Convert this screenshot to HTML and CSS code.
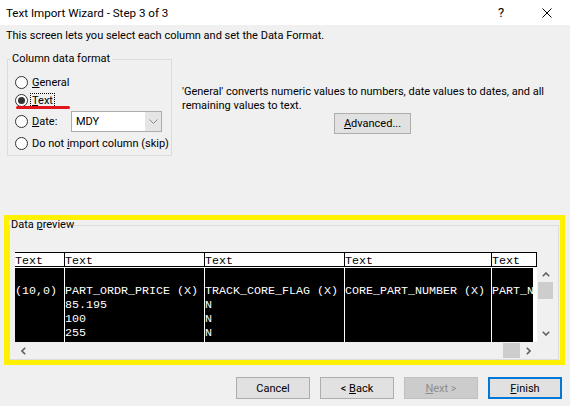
FILE: index.html
```html
<!DOCTYPE html>
<html lang="en">
<head>
  <meta charset="UTF-8">
  <title>Text Import Wizard - Step 3 of 3</title>
  <link rel="stylesheet" href="styles.css">
</head>
<body>

  <div class="titlebar">
    <span class="title">Text Import Wizard - Step 3 of 3</span>
    <span class="ctl help">?</span>
    <span class="ctl">
      <svg width="10" height="10" viewBox="0 0 10 10"><path d="M0.5 0.5L9.5 9.5M9.5 0.5L0.5 9.5" stroke="#000" stroke-width="1"/></svg>
    </span>
  </div>

  <p class="intro">This screen lets you select each column and set the Data Format.</p>

  <div class="options">
    <fieldset class="group format">
      <legend>Column data format</legend>
      <div class="opt"><span class="radio"></span><span class="lbl"><u>G</u>eneral</span></div>
      <div class="opt marked">
        <span class="radio on"></span><span class="lbl focus"><u>T</u>ext</span>
        <span class="redline"></span>
      </div>
      <div class="opt date">
        <span class="radio"></span><span class="lbl"><u>D</u>ate:</span>
        <div class="combo">
          <span class="value">MDY</span>
          <span class="drop"><svg width="9" height="5" viewBox="0 0 9 5"><path d="M0.5 0.5L4.5 4.5L8.5 0.5" fill="none" stroke="#888" stroke-width="1"/></svg></span>
        </div>
      </div>
      <div class="opt skip"><span class="radio"></span><span class="lbl">Do not <u>i</u>mport column (skip)</span></div>
    </fieldset>

    <div class="info">
      <p>'General' converts numeric values to numbers, date values to dates, and all<br>remaining values to text.</p>
      <button class="btn adv"><u>A</u>dvanced...</button>
    </div>
  </div>

  <div class="highlight">
    <fieldset class="group preview-box">
      <legend>Data <u>p</u>review</legend>
      <div class="preview">
        <div class="head">
          <div class="hcell">Text</div>
          <div class="hcell">Text</div>
          <div class="hcell">Text</div>
          <div class="hcell">Text</div>
          <div class="hcell">Text</div>
        </div>
        <div class="blank"></div>
        <div class="rows">
          <div class="col">(10,0)</div>
          <div class="col">PART_ORDR_PRICE (X)<br>85.195<br>100<br>255</div>
          <div class="col">TRACK_CORE_FLAG (X)<br>N<br>N<br>N</div>
          <div class="col">CORE_PART_NUMBER (X)</div>
          <div class="col">PART_NO</div>
        </div>
        <div class="vscroll">
          <span class="arrow"><svg width="8" height="5" viewBox="0 0 8 5"><path d="M0.8 4.2L4 1L7.2 4.2" fill="none" stroke="#606060" stroke-width="1.6"/></svg></span>
          <span class="thumb"></span>
          <span class="fill"></span>
          <span class="arrow"><svg width="8" height="5" viewBox="0 0 8 5"><path d="M0.8 0.8L4 4L7.2 0.8" fill="none" stroke="#606060" stroke-width="1.6"/></svg></span>
        </div>
        <div class="hscroll">
          <span class="arrow"><svg width="5" height="8" viewBox="0 0 5 8"><path d="M4.2 0.8L1 4L4.2 7.2" fill="none" stroke="#606060" stroke-width="1.6"/></svg></span>
          <span class="fill"></span>
          <span class="thumb"></span>
          <span class="arrow"><svg width="5" height="8" viewBox="0 0 5 8"><path d="M0.8 0.8L4 4L0.8 7.2" fill="none" stroke="#606060" stroke-width="1.6"/></svg></span>
        </div>
        <div class="corner"></div>
      </div>
    </fieldset>
  </div>

  <div class="actions">
    <button class="btn">Cancel</button>
    <button class="btn">&lt; <u>B</u>ack</button>
    <button class="btn" disabled><u>N</u>ext &gt;</button>
    <button class="btn default"><u>F</u>inish</button>
  </div>

</body>
</html>
```

FILE: styles.css
```css
body {
  margin: 0;
  width: 570px;
  height: 406px;
  overflow: hidden;
  background: #f0f0f0;
  color: #000;
  font-family: "Segoe UI", Roboto, "Noto Sans", sans-serif;
  font-size: 11px;
}

u {
  text-decoration-thickness: 1px;
}

/* title bar */

.titlebar {
  display: flex;
  align-items: center;
  height: 25px;
  padding-left: 6px;
  background: #fff;
  font-size: 11.6px;
}

.titlebar .title {
  flex: 1;
}

.titlebar .ctl {
  width: 46px;
  display: flex;
  justify-content: center;
}

.titlebar .help {
  font-size: 13px;
}

.intro {
  margin: 0;
  padding: 4px 0 0 6px;
  line-height: 14px;
}

/* group boxes */

.group {
  margin: 0;
  min-width: 0;
  border: 1px solid #dcdcdc;
  box-sizing: border-box;
}

.group legend {
  line-height: 14px;
}

.options {
  display: flex;
  margin-top: 9px;
}

.format {
  width: 165px;
  margin-left: 7px;
  padding: 7px 0 3px 2px;
}

.format legend {
  padding: 0 2px;
}

.opt {
  display: flex;
  align-items: center;
  height: 18px;
  padding-left: 5px;
}

.opt.date {
  height: 21px;
  margin-top: 2px;
}

.opt.skip {
  margin-top: 2px;
}

.marked {
  position: relative;
}

.radio {
  width: 13px;
  height: 13px;
  box-sizing: border-box;
  border: 1px solid #333;
  border-radius: 50%;
  background: #fff;
  display: flex;
  align-items: center;
  justify-content: center;
}

.radio.on::after {
  content: "";
  width: 7px;
  height: 7px;
  border-radius: 50%;
  background: #333;
}

.lbl {
  margin-left: 2px;
  padding: 0 1px;
  line-height: 13px;
  border: 1px solid transparent;
  white-space: nowrap;
}

.lbl.focus {
  border: 1px dotted #000;
}

.redline {
  position: absolute;
  left: 6px;
  top: 15px;
  width: 54px;
  height: 3px;
  border-radius: 2px;
  background: #e4141c;
}

.combo {
  display: flex;
  width: 91px;
  height: 21px;
  margin-left: auto;
  margin-right: 9px;
  box-sizing: border-box;
  border: 1px solid #acacac;
  background: #fff;
}

.combo .value {
  flex: 1;
  padding-left: 4px;
  line-height: 19px;
}

.combo .drop {
  width: 16px;
  display: flex;
  align-items: center;
  justify-content: center;
  background: #e5e5e5;
}

.info {
  margin: 33px 0 0 10px;
}

.info p {
  margin: 0;
  line-height: 14px;
  white-space: nowrap;
}

/* buttons */

.btn {
  height: 21px;
  padding: 0;
  font: inherit;
  color: #000;
  background: #e1e1e1;
  border: 1px solid #adadad;
}

.adv {
  width: 77px;
  margin-left: 152px;
}

.actions {
  display: flex;
  justify-content: flex-end;
  gap: 10px;
  margin-top: 12px;
  padding-right: 8px;
}

.actions .btn {
  width: 74px;
  height: 22px;
}

.btn:disabled {
  background: #cccccc;
  border-color: #bfbfbf;
  color: #8d8d8d;
}

.btn.default {
  border: 2px solid #0078d7;
}

/* data preview */

.highlight {
  width: 561px;
  height: 150px;
  margin: 59px 0 0 4px;
  box-sizing: border-box;
  border: 5px solid #fff100;
}

.preview-box {
  width: 550px;
  height: 140px;
  padding: 22px 0 0 1px;
}

.preview-box legend {
  padding: 0;
  line-height: 10px;
}

.preview {
  display: grid;
  grid-template-columns: 522px 17px;
  grid-template-rows: 15px 75px 17px;
  margin-left: 4px;
  font-family: "Liberation Mono", "Courier New", monospace;
  font-size: 11.66px;
}

.head {
  display: grid;
  grid-template-columns: 49px 140px 140px 147px 1fr;
  box-sizing: border-box;
  border-top: 1px solid #000;
  border-right: 1px solid #000;
  border-bottom: 1px solid #000;
  background: #fff;
}

.hcell {
  height: 13px;
  line-height: 16px;
}

.hcell + .hcell {
  border-left: 1px solid #000;
}

.rows {
  display: grid;
  grid-template-columns: 49px 140px 140px 147px 42px;
  border-top: 1px solid #fff;
  background: #fff;
}

.rows .col {
  padding-top: 16px;
  line-height: 14px;
  white-space: pre;
  overflow: hidden;
  background: #000;
  color: #fff;
}

.rows .col + .col {
  border-left: 1px solid #fff;
}

.vscroll {
  display: flex;
  flex-direction: column;
  align-items: center;
}

.vscroll .arrow {
  height: 15px;
  display: flex;
  align-items: center;
  justify-content: center;
}

.vscroll .arrow:last-child {
  height: 17px;
}

.vscroll .thumb {
  width: 15px;
  height: 17px;
  background: #cdcdcd;
}

.fill {
  flex: 1;
}

.hscroll {
  display: flex;
  align-items: center;
}

.hscroll .arrow {
  width: 17px;
  height: 17px;
  display: flex;
  align-items: center;
  justify-content: center;
}

.hscroll .thumb {
  width: 17px;
  height: 15px;
  background: #cdcdcd;
}
```
